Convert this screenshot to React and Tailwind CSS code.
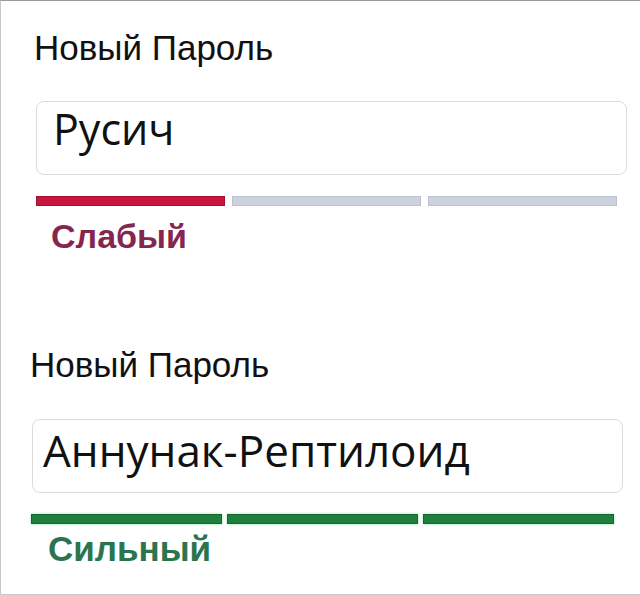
export default function App() {
  const label = "text-[35px] leading-[35px] text-[#111] [font-family:'Liberation_Sans',Arial,sans-serif]";
  const status = "font-bold [font-family:'Liberation_Sans',Arial,sans-serif]";
  const value = "[font-family:'Open_Sans',sans-serif] text-[#111]";
  const redBar = "h-[10px] flex-1 bg-[#c9163e] border border-[#a50f32]";
  const grayBar = "h-[10px] flex-1 bg-[#cdd3de] border border-[#bcc3cf]";
  const greenBar = "h-[10px] flex-1 bg-[#1f7f3f] border border-[#17682f] shadow-[0_0_3px_#8fdca6]";

  return (
    <div className="w-[640px] h-[595px] bg-white border-t border-l border-b border-t-[#9a9a9a] border-l-[#c8c8c8] border-b-[#c8c8c8] flex flex-col pt-[29px] overflow-hidden">
      {/* weak password */}
      <div className={`${label} ml-[33px]`}>Новый Пароль</div>
      <div className="mt-[36px] ml-[35px] w-[591px] h-[74px] border border-[#dcdcdc] rounded-lg pt-[5px] pl-[16px]">
        <div className={`${value} text-[43px] leading-[43px]`}>Русич</div>
      </div>
      <div className="mt-[21px] ml-[35px] w-[581px] flex gap-[7px]">
        <div className={redBar} />
        <div className={grayBar} />
        <div className={grayBar} />
      </div>
      <div className={`${status} text-[34px] leading-[34px] mt-[13px] ml-[50px] text-[#86264f]`}>Слабый</div>

      {/* strong password */}
      <div className={`${label} mt-[94px] ml-[29px]`}>Новый Пароль</div>
      <div className="mt-[37px] ml-[31px] w-[591px] h-[74px] border border-[#dcdcdc] rounded-lg pt-[8px] pl-[10px]">
        <div className={`${value} text-[44px] leading-[44px]`}>Аннунак-Рептилоид</div>
      </div>
      <div className="mt-[21px] ml-[30px] w-[583px] flex gap-[5px]">
        <div className={greenBar} />
        <div className={greenBar} />
        <div className={greenBar} />
      </div>
      <div className={`${status} text-[35px] leading-[35px] mt-[7px] ml-[47px] text-[#2a7550]`}>Сильный</div>
    </div>
  );
}
